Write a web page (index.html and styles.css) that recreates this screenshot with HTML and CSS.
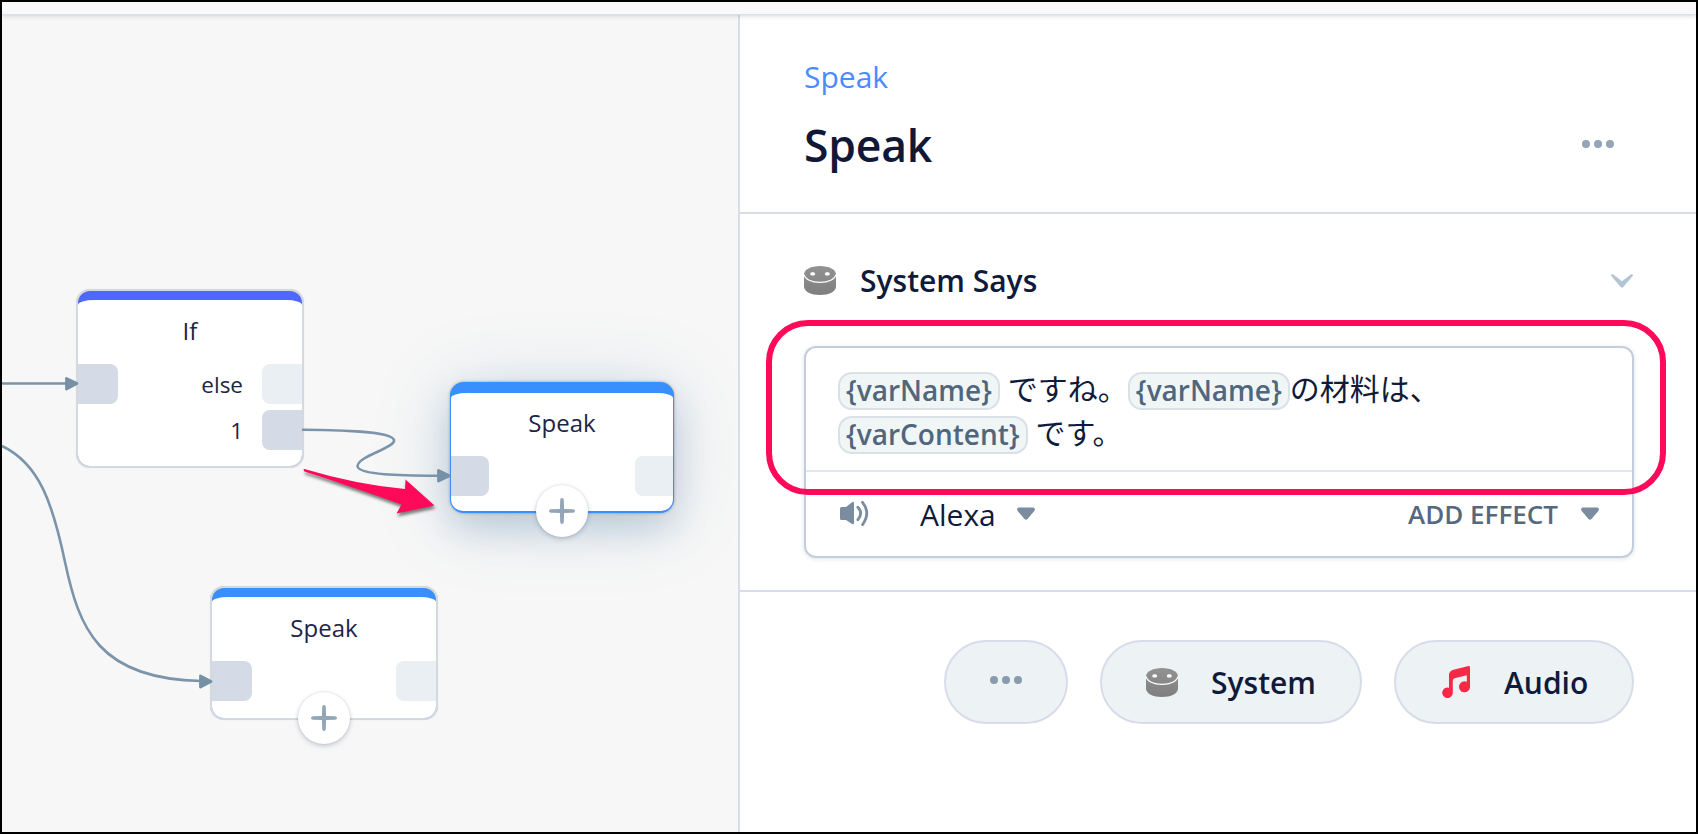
FILE: index.html
```html
<!DOCTYPE html>
<html lang="ja">
<head>
<meta charset="utf-8">
<title>Speak</title>
<link rel="stylesheet" href="styles.css">
</head>
<body>
<svg class="defs" width="0" height="0" aria-hidden="true">
  <defs>
    <linearGradient id="botFill" x1="0" y1="0" x2="0" y2="1"><stop offset="0" stop-color="#929292"/><stop offset="1" stop-color="#7f7f7f"/></linearGradient>
    <symbol id="bot" viewBox="0 0 32 29">
      <path fill="url(#botFill)" d="M0 8.500C0 3.500 7.200 0 16 0s16 3.500 16 8.500V20.500C32 25.600 24.800 29 16 29S0 25.600 0 20.500z"/>
      <path class="bot-line" d="M.2 8.500C.8 13.200 7.600 16.400 16 16.400S31.200 13.200 31.800 8.500"/>
      <rect class="bot-eye" x="6.300" y="6.200" width="4.800" height="3.300" rx="1.600"/>
      <rect class="bot-eye" x="20.900" y="6.200" width="4.800" height="3.300" rx="1.600"/>
    </symbol>
    <symbol id="dots" viewBox="0 0 32 8"><circle cx="4" cy="4" r="4"/><circle cx="16" cy="4" r="4"/><circle cx="28" cy="4" r="4"/></symbol>
    <symbol id="caret" viewBox="0 0 18 13"><path d="M2 .5H16C17.800 .5 18.500 2.600 17.300 4L10.500 11.900Q9 13.400 7.500 11.900L.7 4C-.5 2.600.2 .5 2 .5z"/></symbol>
    <symbol id="plus" viewBox="0 0 26 26"><path d="M13 0Q14.700 0 14.800 2L15.100 10.900L24 11.300Q26 11.400 26 13T24 14.700L15.100 15.100L14.800 24Q14.700 26 13 26T11.200 24L10.900 15.100L2 14.700Q0 14.600 0 13T2 11.300L10.900 10.900L11.200 2Q11.300 0 13 0z"/></symbol>
  </defs>
</svg>
<div class="app">
  <header class="topbar"></header>
  <main class="workspace">
    <section class="canvas">
      <div class="node node-if">
        <div class="node-inner">
          <div class="node-title">If</div>
          <div class="ports"><span class="port in on"></span><span class="port-label">else</span><span class="port out"></span></div>
          <div class="ports next"><span class="port-label">1</span><span class="port out on"></span></div>
        </div>
      </div>
      <div class="node speak selected">
        <div class="node-inner">
          <div class="node-title">Speak</div>
          <div class="ports"><span class="port in on"></span><span class="port out"></span></div>
        </div>
        <span class="add"><svg class="plus"><use href="#plus"/></svg></span>
      </div>
      <div class="node speak second">
        <div class="node-inner">
          <div class="node-title">Speak</div>
          <div class="ports"><span class="port in on"></span><span class="port out"></span></div>
        </div>
        <span class="add"><svg class="plus"><use href="#plus"/></svg></span>
      </div>
      <svg class="links" viewBox="2 16 736 816">
        <g class="wire">
          <path d="M2 383.500H68"/>
          <path d="M302 429.700C340 430 391 431 394 440C396 448 357 456 357.500 466.500C360 475 400 475.500 438 475.700"/>
          <path d="M2 446C40 464 53 505 65 562C79 628 98 679 201 681"/>
        </g>
        <g class="heads">
          <path d="M66.500 378.500L77 383.500L66.500 389z"/>
          <path d="M438.500 470.500L449.500 475.800L438.500 481z"/>
          <path d="M200.500 676L211 681.500L200.500 687z"/>
        </g>
        <path class="pointer" d="M304.500 469Q356 484.500 405 489L405.500 479.500L434.500 505.500L396.500 513.500L401.500 504.500Q350 486 304.500 471.500Q302.500 469 304.500 469z"/>
      </svg>
    </section>
    <aside class="panel">
      <div class="panel-head">
        <div class="headings">
          <div class="crumb">Speak</div>
          <h1 class="title">Speak</h1>
        </div>
        <svg class="dots head-dots"><use href="#dots"/></svg>
      </div>
      <div class="says">
        <div class="says-head">
          <svg class="bot"><use href="#bot"/></svg>
          <span class="says-title">System Says</span>
          <svg class="chevron" viewBox="0 0 22 14"><path d="M2 .3L11 7.200L20 .3Q22.500-.2 21.700 1.900L12.300 12.900Q11 14.400 9.700 12.900L.3 1.900Q-.5-.2 2 .3z"/></svg>
        </div>
        <div class="editor">
          <div class="speech">
            <div class="line"><span class="chip">{varName}</span><span class="jp gap">ですね。</span><span class="chip">{varName}</span><span class="jp">の材料は、</span></div>
            <div class="line"><span class="chip">{varContent}</span><span class="jp gap">です。</span></div>
          </div>
          <div class="voice-row">
            <svg class="volume" viewBox="0 0 29 25"><path class="cone" d="M1.500 6H6L12 1.200Q14 .2 14 2V22Q14 24 12 23L6 19H1.500Q0 19 0 17.500V7.500Q0 6 1.500 6z"/><path class="wave" d="M17.800 6.200Q23.500 12 17.800 18.800M22.500 1.300Q31 12 22.500 23.700"/></svg>
            <span class="voice">Alexa</span>
            <svg class="caret"><use href="#caret"/></svg>
            <span class="effect">ADD EFFECT</span>
            <svg class="caret last"><use href="#caret"/></svg>
          </div>
          <div class="highlight"></div>
        </div>
      </div>
      <div class="actions">
        <div class="pill more"><svg class="dots"><use href="#dots"/></svg></div>
        <div class="pill system"><svg class="bot"><use href="#bot"/></svg><span>System</span></div>
        <div class="pill audio"><svg class="note" viewBox="0 0 28 32"><path d="M7 22.500V9Q7 5.500 10.500 4L25.500.2Q28 -.5 28 1.500V20.500A5.500 5.500 0 1 1 24.800 15.800V9.200L12.500 12.300Q10.800 13 10.800 15V27A5.300 5.300 0 1 1 7 21.700z"/></svg><span>Audio</span></div>
      </div>
    </aside>
  </main>
</div>
</body>
</html>
```
FILE: styles.css
```css
* { box-sizing: border-box; }
body { margin: 0; font-family: "Open Sans", "Noto Sans CJK JP", sans-serif; color: #101a3a; }
svg { display: block; flex: none; }
.defs { position: absolute; }
.app { width: 1698px; height: 834px; border: 2px solid #000; background: #fff; display: flex; flex-direction: column; overflow: hidden; }
.topbar { flex: none; height: 13px; background: #f9f9f9; border-bottom: 1px solid #dbe0e6; box-shadow: 0 1px 4px rgba(60,80,110,.22); position: relative; z-index: 2; }
.workspace { flex: 1; display: flex; margin-top: -1px; min-height: 0; }
.canvas { position: relative; width: 736px; background: #f7f7f7; overflow: hidden; }

/* flow canvas */
.links { position: absolute; left: 0; top: 2px; width: 736px; height: 816px; }
.wire { fill: none; stroke: #7b94aa; stroke-width: 2.600; }
.heads { fill: #7690a6; stroke: #7690a6; stroke-width: 2.800; stroke-linejoin: round; }
.pointer { fill: #ff0a5a; filter: drop-shadow(1px 3px 1.500px rgba(0,0,0,.5)); }
.node { position: absolute; width: 228px; border: 2px solid #d3d9df; border-radius: 14px; background: #3a8fff; color: #1d2545; box-shadow: 0 0 1px rgba(0,0,0,.15); }
.node-inner { margin-top: 9px; height: calc(100% - 9px); background: #fff; border-radius: 16px 16px 12px 12px / 5px 5px 12px 12px; }
.node-if { left: 74px; top: 275px; height: 179px; background: #4f68fb; }
.speak { height: 134px; }
.selected { left: 448px; top: 368px; width: 224px; height: 131px; border-color: #3a8fff; border-width: 2px 1.500px; box-shadow: 0 0 3px rgba(80,90,100,.55), 0 16px 34px rgba(80,128,170,.27), 0 6px 76px rgba(80,128,160,.22); }
.second { left: 208px; top: 572px; }
.node-title { text-align: center; font-size: 24px; line-height: 34px; padding-top: 14px; height: 64px; }
.selected .node-title { padding-top: 13px; height: 63px; }
.ports { display: flex; align-items: center; height: 40px; }
.ports.next { margin-top: 6px; }
.port { width: 40px; height: 40px; background: #e9eff3; }
.port.on { background: #d4dbe6; }
.selected .port { width: 38px; }
.in { border-radius: 0 8px 8px 0; }
.out { border-radius: 8px 0 0 8px; margin-left: auto; }
.port-label { font-size: 22.500px; line-height: 40px; margin-left: auto; width: 60px; padding-right: 19px; padding-top: 1px; display: flex; justify-content: flex-end; }
.port-label + .out { margin-left: 0; }
.add { position: absolute; left: 50%; bottom: -26px; width: 52px; height: 52px; margin-left: -26px; border-radius: 50%; background: #fff; box-shadow: 0 0 2px rgba(60,70,110,.2), 0 2px 5px rgba(60,70,110,.25); display: grid; place-items: center; }
.plus { width: 26px; height: 26px; fill: #93a6b7; }

/* side panel */
.panel { flex: 1; background: #fff; border-left: 2px solid #d8dbe9; display: flex; flex-direction: column; }
.panel-head { height: 200px; border-bottom: 2px solid #d8dbe9; padding: 42px 82px 0 64px; display: flex; justify-content: space-between; }
.crumb { font-size: 30px; line-height: 42px; color: #4a8bff; }
.title { margin: 16px 0 0; font-size: 44.500px; line-height: 62px; font-weight: 600; letter-spacing: -.2px; color: #101836; }
.dots { width: 32px; height: 8px; fill: #93a5b6; }
.head-dots { margin-top: 84px; }
.says { height: 378px; border-bottom: 2px solid #d8dbe9; padding: 0 62px 0 64px; }
.says-head { display: flex; align-items: center; height: 132px; padding: 0 1px 0 0; }
.bot { width: 32px; height: 29px; }
.bot-line { fill: none; stroke: #fff; stroke-width: 1.300; }
.bot-eye { fill: #fff; }
.says-title { margin-left: 24px; font-size: 30px; font-weight: 600; }
.chevron { width: 22px; height: 14px; margin: 1px 0 0 auto; fill: #b3c5d5; }
.editor { position: relative; height: 212px; border: 2px solid #c4cddb; border-radius: 12px; box-shadow: 0 0 5px rgba(40,60,80,.08), 0 2px 4px rgba(40,60,80,.06); }
.speech { height: 124px; border-bottom: 2px solid #e3e6ed; padding: 21px 32px 0; }
.line { display: flex; height: 44px; align-items: center; white-space: nowrap; }
.chip { height: 38px; padding: 0 6px; border: 2px solid #d9e0e6; border-radius: 14px; background: #f0f6f6; color: #50667d; font-size: 28px; line-height: 32px; font-weight: 600; }
.jp { font-family: "Noto Sans CJK JP", sans-serif; font-weight: 400; font-size: 30px; line-height: 38px; height: 46px; }
.gap { margin-left: 8px; }
.voice-row { display: flex; align-items: center; height: 84px; padding: 0 33px; }
.volume { width: 29px; height: 25px; margin: -2px 0 0 1px; }
.cone { fill: #7a8da0; }
.wave { fill: none; stroke: #7a8da0; stroke-width: 2.800; stroke-linecap: round; }
.voice { margin-left: 51px; font-size: 30px; }
.caret { width: 18px; height: 13px; fill: #7a8da0; margin: -2px 0 0 21px; }
.last { margin-left: 23px; }
.effect { margin-left: auto; font-size: 26px; font-weight: 600; color: #55697e; }
.highlight { position: absolute; left: -40px; top: -28px; width: 900px; height: 175px; border: 6px solid #ff0a5a; border-radius: 42px; }
.actions { display: flex; justify-content: flex-end; padding: 48px 62px 0 0; }
.pill { height: 84px; border: 2px solid #d8dbe9; border-radius: 42px; background: #edf3f5; display: flex; align-items: center; font-size: 30px; font-weight: 600; }
.more { width: 124px; justify-content: center; }
.more .dots { margin-top: -4px; fill: #899bae; }
.system { width: 262px; margin-left: 32px; padding-left: 44px; }
.system span { margin-left: 33px; }
.audio { width: 240px; margin-left: 32px; padding-left: 46px; }
.audio span { margin-left: 34px; }
.note { width: 28px; height: 32px; fill: #f92846; }
```
